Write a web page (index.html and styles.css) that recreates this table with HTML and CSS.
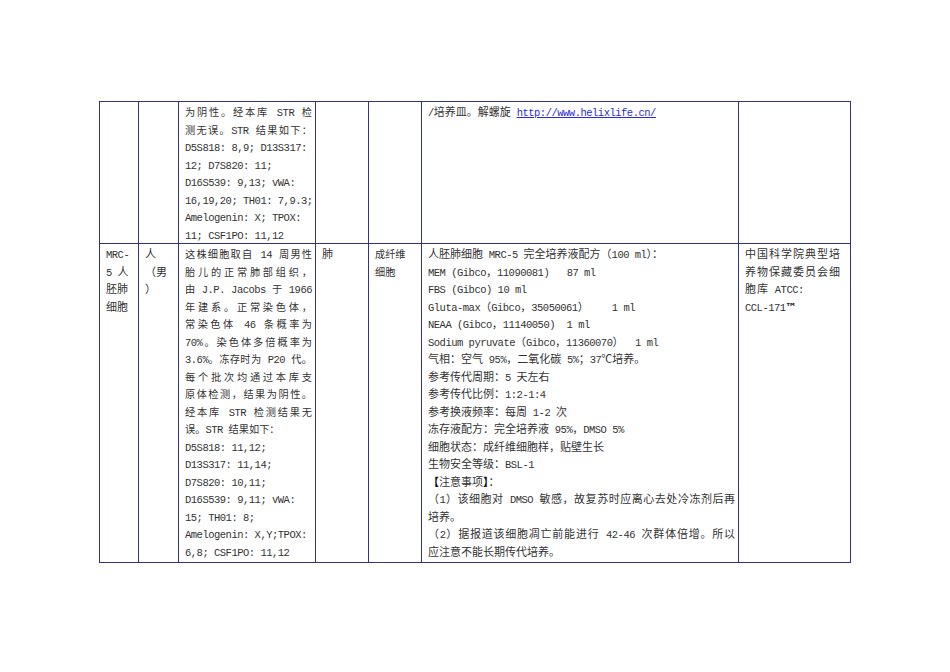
FILE: index.html
```html
<!DOCTYPE html>
<html lang="zh-CN">
<head>
<meta charset="utf-8">
<title>细胞信息表</title>
<link rel="stylesheet" href="styles.css">
</head>
<body>
<div class="page">
<table class="sheet">
<colgroup>
<col class="c1"><col class="c2"><col class="c3"><col class="c4"><col class="c5"><col class="c6"><col class="c7">
</colgroup>
<tr class="r1">
<td></td>
<td></td>
<td class="narrow">
<div class="j">为阴性。经本库<span class="en"> STR </span>检</div>
<div class="j">测无误。<span class="en">STR </span>结果如下：</div>
<div><span class="en">D5S818: 8,9; D13S317:</span></div>
<div><span class="en">12; D7S820: 11;</span></div>
<div><span class="en">D16S539: 9,13; vWA:</span></div>
<div><span class="en">16,19,20; TH01: 7,9.3;</span></div>
<div><span class="en">Amelogenin: X; TPOX:</span></div>
<div><span class="en">11; CSF1PO: 11,12</span></div>
</td>
<td></td>
<td></td>
<td><div><span class="en">/</span>培养皿。解螺旋<span class="en"> </span><a class="link en" href="#">http://www.helixlife.cn/</a></div></td>
<td></td>
</tr>
<tr class="r2">
<td>
<div><span class="en">MRC-</span></div>
<div><span class="en">5 </span>人</div>
<div>胚肺</div>
<div>细胞</div>
</td>
<td>
<div>人</div>
<div>（男</div>
<div>）</div>
</td>
<td class="narrow">
<div class="j">这株细胞取自<span class="en"> 14 </span>周男性</div>
<div class="j">胎儿的正常肺部组织，</div>
<div class="j">由<span class="en"> J.P. Jacobs </span>于<span class="en"> 1966</span></div>
<div class="j">年建系。正常染色体，</div>
<div class="j">常染色体<span class="en"> 46 </span>条概率为</div>
<div class="j"><span class="en">70%</span>。染色体多倍概率为</div>
<div class="j"><span class="en">3.6%</span>。冻存时为<span class="en"> P20 </span>代。</div>
<div class="j">每个批次均通过本库支</div>
<div class="j">原体检测，结果为阴性。</div>
<div class="j">经本库<span class="en"> STR </span>检测结果无</div>
<div>误。<span class="en">STR </span>结果如下：</div>
<div><span class="en">D5S818: 11,12;</span></div>
<div><span class="en">D13S317: 11,14;</span></div>
<div><span class="en">D7S820: 10,11;</span></div>
<div><span class="en">D16S539: 9,11; vWA:</span></div>
<div><span class="en">15; TH01: 8;</span></div>
<div><span class="en">Amelogenin: X,Y;TPOX:</span></div>
<div><span class="en">6,8; CSF1PO: 11,12</span></div>
</td>
<td><div>肺</div></td>
<td class="narrow">
<div>成纤维</div>
<div>细胞</div>
</td>
<td>
<div>人胚肺细胞<span class="en"> MRC-5 </span>完全培养液配方（<span class="en">100 ml</span>）：</div>
<div><span class="en">MEM (Gibco</span>，<span class="en">11090081)   87 ml</span></div>
<div><span class="en">FBS (Gibco) 10 ml</span></div>
<div><span class="en">Gluta-max</span>（<span class="en">Gibco</span>，<span class="en">35050061</span>）<span class="en">    1 ml</span></div>
<div><span class="en">NEAA (Gibco</span>，<span class="en">11140050)  1 ml</span></div>
<div><span class="en">Sodium pyruvate</span>（<span class="en">Gibco</span>，<span class="en">11360070</span>）<span class="en">  1 ml</span></div>
<div>气相：空气<span class="en"> 95%</span>，二氧化碳<span class="en"> 5%</span>；<span class="en">37</span>℃培养。</div>
<div>参考传代周期：<span class="en">5 </span>天左右</div>
<div>参考传代比例：<span class="en">1:2-1:4</span></div>
<div>参考换液频率：每周<span class="en"> 1-2 </span>次</div>
<div>冻存液配方：完全培养液<span class="en"> 95%</span>，<span class="en">DMSO 5%</span></div>
<div>细胞状态：成纤维细胞样，贴壁生长</div>
<div>生物安全等级：<span class="en">BSL-1</span></div>
<div><b class="br">【</b>注意事项<b class="br">】</b>：</div>
<div class="j">（<span class="en">1</span>）该细胞对<span class="en"> DMSO </span>敏感，故复苏时应离心去处冷冻剂后再</div>
<div>培养。</div>
<div class="j">（<span class="en">2</span>）据报道该细胞凋亡前能进行<span class="en"> 42-46 </span>次群体倍增。所以</div>
<div>应注意不能长期传代培养。</div>
</td>
<td class="spaced">
<div>中国科学院典型培</div>
<div>养物保藏委员会细</div>
<div>胞库<span class="en"> ATCC:</span></div>
<div><span class="en">CCL-171</span><span class="tm">™</span></div>
</td>
</tr>
</table>
</div>
</body>
</html>
```

FILE: styles.css
```css
html, body {
  margin: 0;
  padding: 0;
  background: #ffffff;
}

.page {
  width: 950px;
  height: 672px;
  padding: 101px 0 0 99px;
  box-sizing: border-box;
}

.sheet {
  border-collapse: collapse;
  table-layout: fixed;
  width: 751px;
  font-family: "Noto Sans CJK SC", "Liberation Sans", sans-serif;
  font-size: 11px;
  line-height: 17.5px;
  color: #333333;
}

.c1 { width: 39px; }
.c2 { width: 40px; }
.c3 { width: 137px; }
.c4 { width: 53px; }
.c5 { width: 53px; }
.c6 { width: 317px; }
.c7 { width: 112px; }

.sheet td {
  border: 1px solid #34347e;
  vertical-align: top;
  padding: 1px 3px 0 6px;
}

.r2 td {
  padding-bottom: 2px;
}

.sheet td.narrow {
  font-size: 10.2px;
}

.sheet td.spaced {
  letter-spacing: 1px;
}

.sheet td div {
  white-space: pre;
}

.sheet td div.j {
  white-space: normal;
  text-align: justify;
  text-align-last: justify;
}

.sheet .en {
  font-family: "Liberation Mono", "DejaVu Sans Mono", monospace;
  font-size: 10.5px;
  letter-spacing: -0.5px;
  line-height: 1;
}

.link {
  color: #2a2ad0;
  text-decoration: underline;
}

.br {
  font-weight: bold;
  color: #111111;
}

.tm {
  font-family: "DejaVu Sans", sans-serif;
  font-weight: bold;
  font-size: 11px;
  letter-spacing: 0;
  line-height: 1;
  color: #111111;
}
```
